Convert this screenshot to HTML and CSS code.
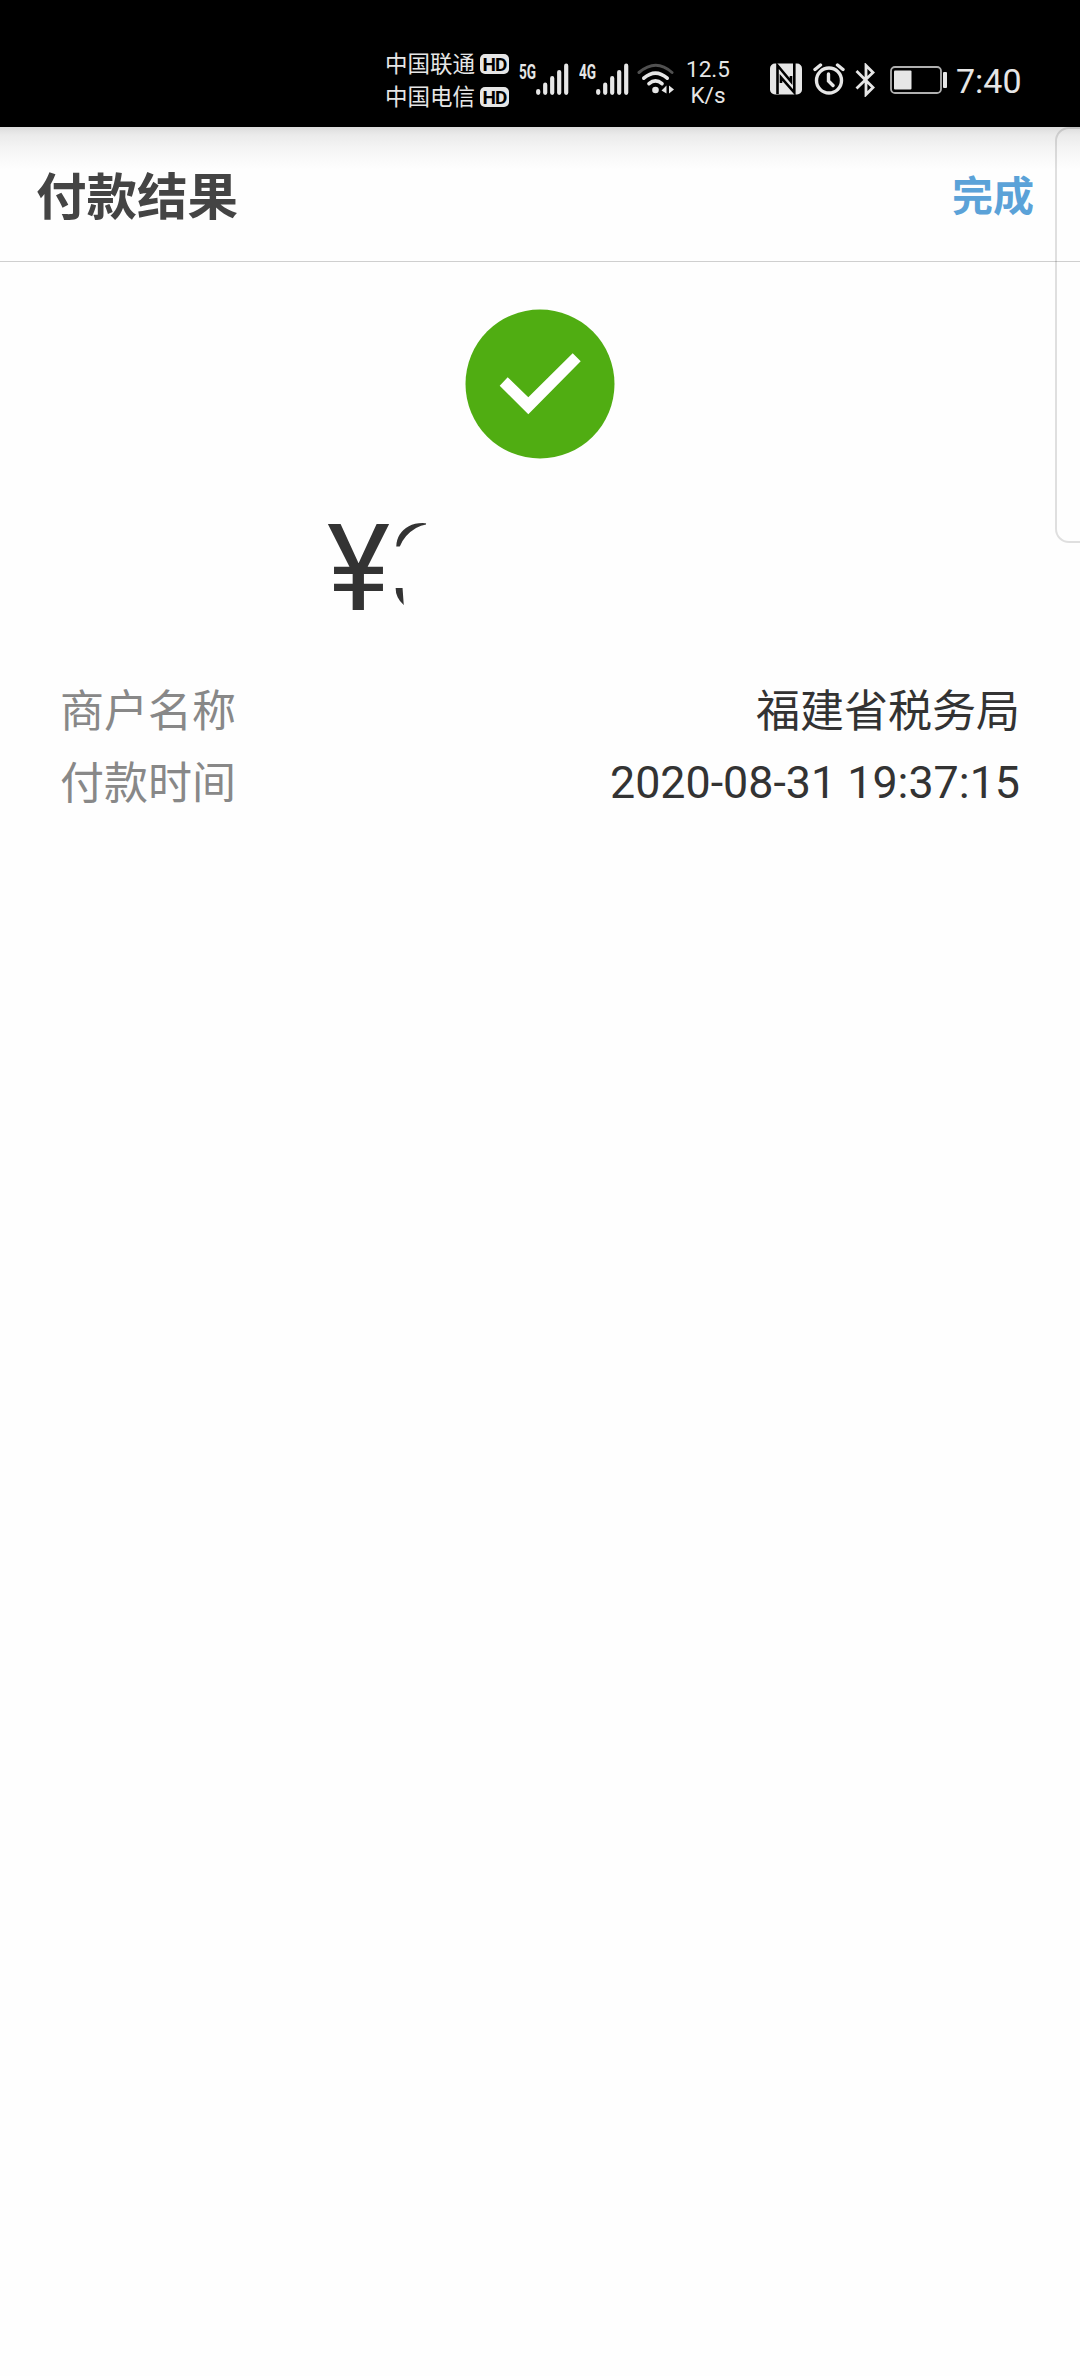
FILE: index.html
```html
<!DOCTYPE html>
<html lang="zh-CN">
<head>
<meta charset="UTF-8">
<meta name="viewport" content="width=device-width, initial-scale=1.0">
<title>付款结果</title>
<link rel="stylesheet" href="styles.css">
</head>
<body>
	<!-- Status bar -->
	<div class="status-bar">
		<div class="carriers">
			<div class="carrier"><span>中国联通</span><span class="hd">HD</span></div>
			<div class="carrier"><span>中国电信</span><span class="hd">HD</span></div>
		</div>
		<div class="signal">
			<span class="network">5G</span>
			<svg class="bars" width="33" height="32" viewBox="0 0 33 32">
				<path d="M2.2 28v1.8M9.2 21.7v8.1M16.2 15.2v14.6M23.2 9v20.8M30.2 2.7v27.1" />
			</svg>
		</div>
		<div class="signal signal-2">
			<span class="network">4G</span>
			<svg class="bars" width="33" height="32" viewBox="0 0 33 32">
				<path d="M2.2 28v1.8M9.2 21.7v8.1M16.2 15.2v14.6M23.2 9v20.8M30.2 2.7v27.1" />
			</svg>
		</div>
		<svg class="wifi" width="38" height="32" viewBox="0 0 38 32">
			<path class="wifi-off" d="M2 9.5Q19 -5 35 9.5" />
			<path d="M6.8 15.2Q18.5 5 30.2 15.2M12 20.7Q18.5 15 25 20.7" />
			<circle cx="18.5" cy="27" r="3.3" />
			<path class="wifi-data" d="M29.5 22.5v8L24.5 27.5zM32 22.5v8l5-4z" />
		</svg>
		<div class="speed">
			<span>12.5</span>
			<span>K/s</span>
		</div>
		<svg class="nfc" width="32" height="32" viewBox="0 0 32 32">
			<rect x="0" y="0.5" width="32" height="31" rx="5" />
			<path d="M7.5 31V2.5L21 18.5V13M24.3 0V29.5L11 14.5V20" />
		</svg>
		<svg class="alarm" width="32" height="32" viewBox="0 0 32 32">
			<circle cx="16" cy="17.5" r="12.5" />
			<path d="M2 6.5L7.5 2M24.5 2L30 6.5M15.5 11v7l4.5 4.5" />
		</svg>
		<svg class="bluetooth" width="20" height="34" viewBox="0 0 20 34">
			<path d="M1.5 8L18 24.5L11 31.5V2.5L18 9.5L1.5 25.5" />
		</svg>
		<svg class="battery" width="58" height="28" viewBox="0 0 58 28">
			<rect class="battery-case" x="1" y="1" width="50" height="26" rx="4" />
			<rect x="4" y="4.5" width="17.5" height="19" rx="1" />
			<rect x="53" y="6" width="4" height="16" rx="1" />
		</svg>
		<span class="clock">7:40</span>
	</div>

	<!-- Page header -->
	<div class="header">
		<h1>付款结果</h1>
		<a href="#" class="done-button">完成</a>
	</div>

	<!-- Edge panel, runs off the right side -->
	<div class="edge-panel"></div>

	<!-- Payment result -->
	<div class="result">
		<svg class="success" width="150" height="150" viewBox="0 0 150 150">
			<circle cx="75" cy="75" r="74.5" />
			<path d="M34.7 76.7L42.7 68.3L63.3 88.3L107.7 44.3L115.7 52.3L63.3 105.3z" />
		</svg>
		<div class="amount">
			<span>¥</span><span class="digit">3</span>
		</div>
		<div class="row">
			<span class="label">商户名称</span>
			<span class="value">福建省税务局</span>
		</div>
		<div class="row">
			<span class="label">付款时间</span>
			<span class="value time">2020-08-31 19:37:15</span>
		</div>
	</div>
</body>
</html>
```

FILE: styles.css
```css
body {
	font-family: Roboto, "Noto Sans CJK SC", sans-serif;
	margin: 0;
	padding: 0;
	min-height: 2376px;
	background-color: #fefefe;
	position: relative;
	overflow-x: hidden;
}

/* Styles for status bar */
.status-bar {
	display: flex;
	align-items: flex-start;
	box-sizing: border-box;
	height: 127px;
	padding: 48px 0 0 385px;
	background-color: #000;
	color: #e6e6e6;
}

.status-bar svg {
	flex: none;
	margin-top: 15px;
	fill: #e6e6e6;
}

.carriers {
	width: 134px;
}

.carrier {
	display: flex;
	align-items: center;
	gap: 5px;
	height: 33px;
	font-size: 22.5px;
	line-height: 33px;
}

.hd {
	width: 29px;
	height: 20px;
	margin-bottom: 1px;
	border-radius: 5px;
	background-color: #e6e6e6;
	color: #000;
	font-size: 19px;
	font-weight: 700;
	line-height: 21px;
	text-align: center;
	letter-spacing: -0.8px;
}

.signal {
	display: flex;
}

.signal-2 {
	margin-left: 10px;
}

.network {
	width: 17px;
	margin-top: 14px;
	font-size: 20px;
	font-weight: 700;
	line-height: 20px;
	transform: scaleX(0.68);
	transform-origin: left;
}

.status-bar .bars {
	fill: none;
	stroke: #e6e6e6;
	stroke-width: 4.2;
	stroke-linecap: round;
}

.wifi {
	margin-left: 8px;
}

.wifi path {
	fill: none;
	stroke: #e6e6e6;
	stroke-width: 3.6;
	stroke-linecap: round;
}

.wifi .wifi-off {
	stroke: #505050;
	stroke-width: 3;
}

.wifi .wifi-data {
	fill: #e6e6e6;
	stroke: none;
}

.speed {
	display: flex;
	flex-direction: column;
	align-items: center;
	width: 46px;
	margin: 8px 0 0 10px;
	font-size: 22.5px;
	line-height: 26px;
}

.nfc {
	margin-left: 39px;
}

.nfc path {
	fill: none;
	stroke: #000;
	stroke-width: 2.6;
}

.status-bar .alarm {
	margin-left: 11px;
	fill: none;
	stroke: #e6e6e6;
	stroke-width: 3.4;
	stroke-linecap: round;
}

.status-bar .bluetooth {
	margin-top: 15px;
	margin-left: 10px;
	fill: none;
	stroke: #e6e6e6;
	stroke-width: 2.8;
}

.status-bar .battery {
	margin-top: 18px;
	margin-left: 15px;
}

.status-bar .battery-case {
	fill: none;
	stroke: #b0b0b0;
	stroke-width: 1.8;
}

.clock {
	margin: 13px 0 0 8px;
	font-size: 34px;
	line-height: 40px;
}

/* Styles for header */
.header {
	display: flex;
	justify-content: space-between;
	align-items: center;
	box-sizing: border-box;
	height: 135px;
	padding: 0 46px 0 36px;
	border-bottom: 1px solid #cfcfcf;
	background: linear-gradient(#dcdcdc 0, #ebebeb 8px, #f5f5f5 22px, #fefefe 42px);
}

.header h1 {
	margin: 7px 0 0;
	color: #444;
	font-size: 50.5px;
	font-weight: 700;
	line-height: 74px;
}

.done-button {
	margin-bottom: 2px;
	color: #5ba2d8;
	font-size: 41px;
	font-weight: 700;
	text-decoration: none;
}

.edge-panel {
	position: absolute;
	top: 127px;
	left: 1055px;
	box-sizing: border-box;
	width: 60px;
	height: 416px;
	border: 2px solid rgba(0, 0, 0, 0.12);
	border-radius: 14px;
}

/* Styles for payment result */
.result {
	display: flex;
	flex-direction: column;
	padding: 47px 60px 0;
}

.success {
	align-self: center;
	fill: #50ad12;
}

.success path {
	fill: #fff;
}

.amount {
	display: flex;
	height: 140px;
	margin: 40px 0 37px 267px;
	color: #333;
	font-size: 120px;
	line-height: 140px;
}

/* Only the outer left edge of the digit is shown */
.digit {
	clip-path: path("M0 20H36V25.5Q31 26 26 29Q14 36 9.500 48H0zM0 89H12.500L14 110H0z");
}

.row {
	display: flex;
	justify-content: space-between;
	height: 72px;
	font-size: 44px;
	line-height: 72px;
}

.label {
	color: #888;
}

.value {
	color: #333;
}

.time {
	font-size: 44.8px;
	line-height: 70px;
}
```
